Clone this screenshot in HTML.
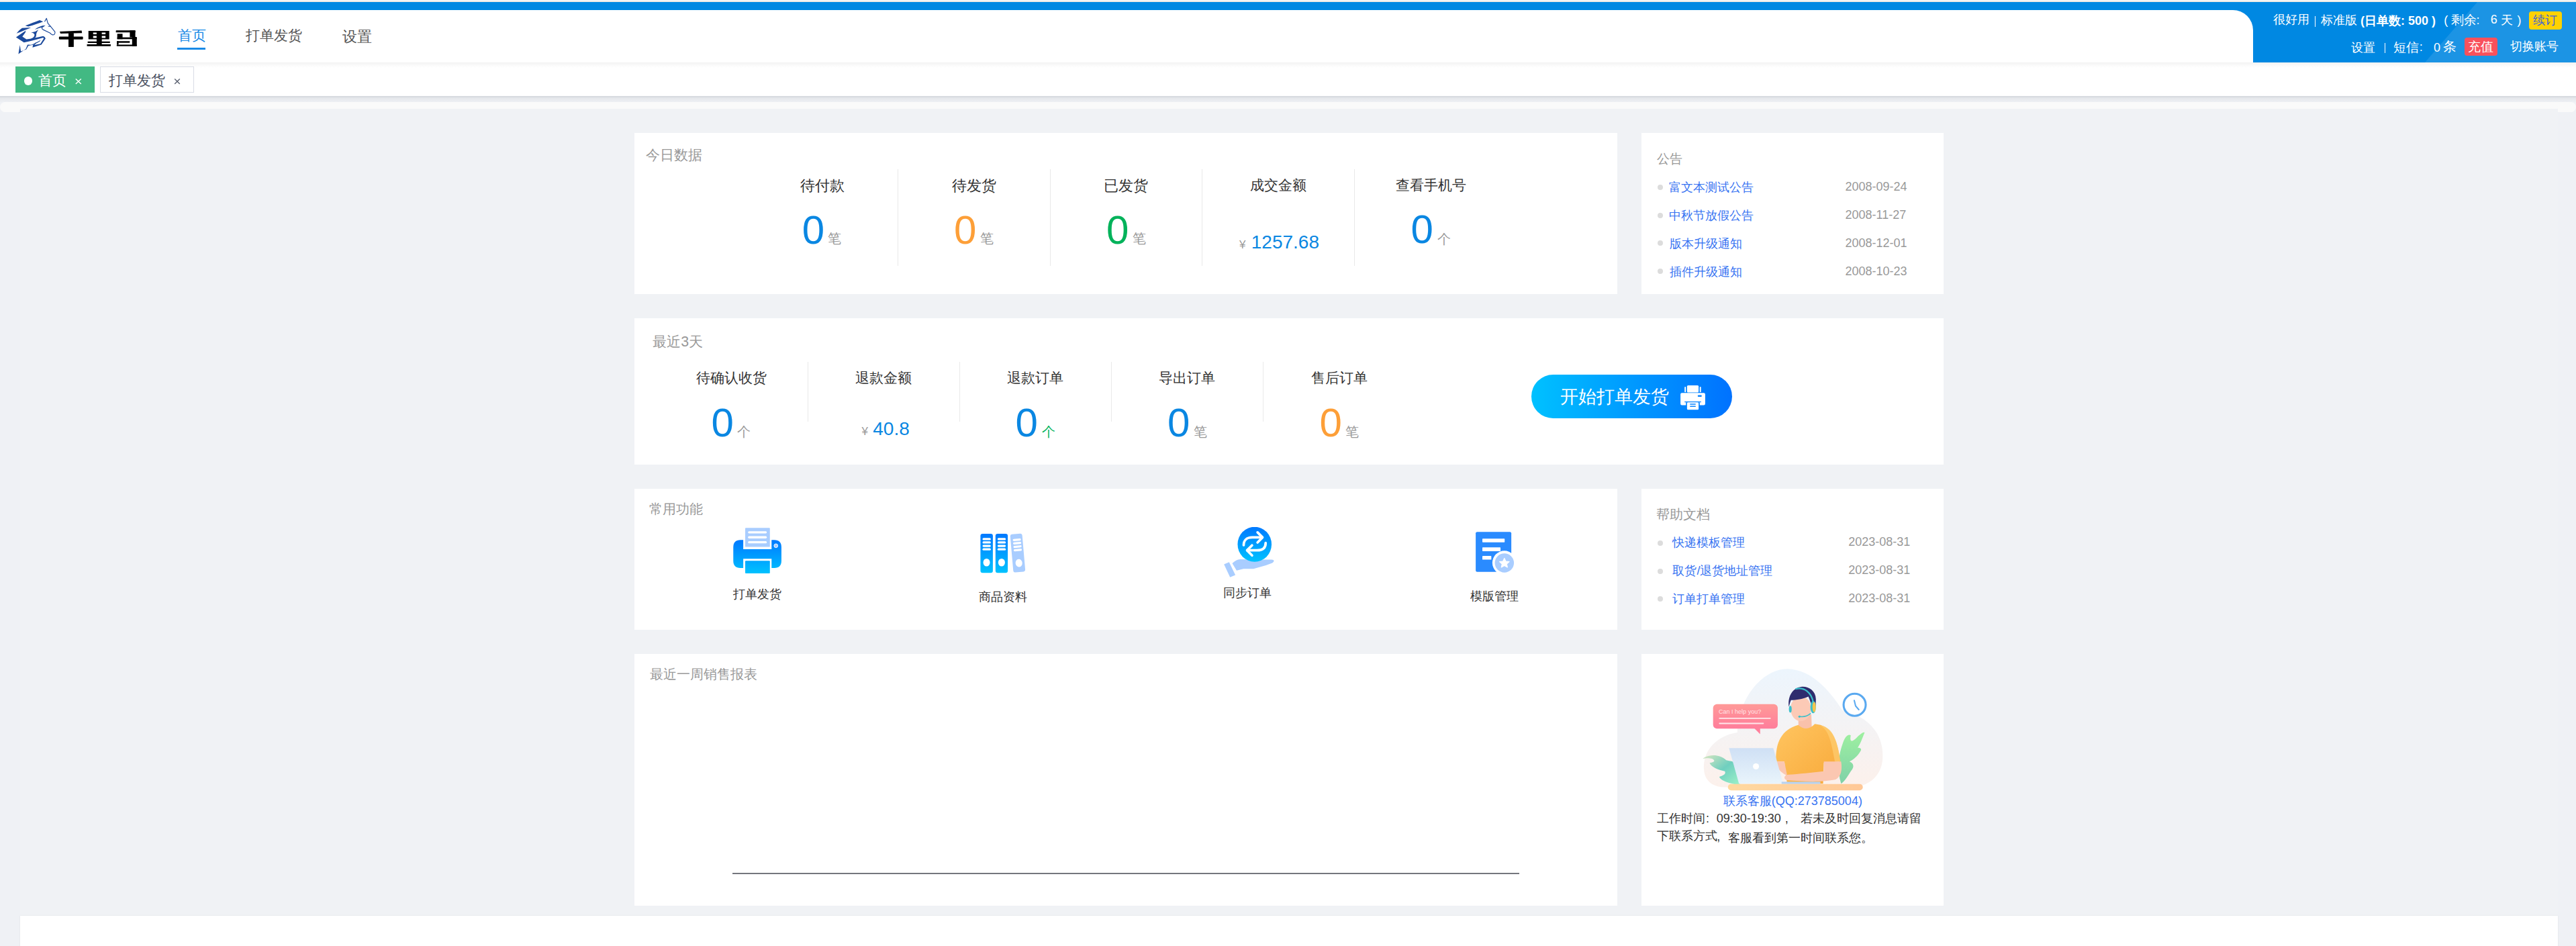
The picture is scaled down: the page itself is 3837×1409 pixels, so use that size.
<!DOCTYPE html>
<html><head><meta charset="utf-8">
<style>
html,body{margin:0;padding:0}
body{width:3837px;height:1409px;position:relative;overflow:hidden;background:#eff1f5;font-family:"Liberation Sans",sans-serif}
.b{position:absolute}
.t{position:absolute;white-space:nowrap;line-height:1;font-family:"Liberation Sans",sans-serif}
.card{position:absolute;background:#fff}
.dv{position:absolute;width:1px;background:#e9e9e9}
.dot{position:absolute;width:8px;height:8px;border-radius:50%;background:#dcdcdc}
svg{position:absolute;overflow:visible}
</style></head><body>
<!-- top browser lines -->
<div class="b" style="left:0;top:0;width:3837px;height:1px;background:#fff"></div>
<div class="b" style="left:0;top:1px;width:3837px;height:1px;background:#e2e2e0"></div>
<div class="b" style="left:0;top:2px;width:3837px;height:1px;background:#faf3ec"></div>
<!-- blue header -->
<div class="b" style="left:0;top:3px;width:3837px;height:90px;background:#0088e2"></div>
<div class="b" style="left:3600px;top:3px;width:237px;height:90px;background:#1c94e4;clip-path:polygon(90px 0,237px 0,237px 90px,12px 90px)"></div>
<div class="b" style="left:0;top:15px;width:3356px;height:78px;background:#fff;border-top-right-radius:30px"></div>
<!-- tab bar -->
<div class="b" style="left:0;top:93px;width:3837px;height:50px;background:#fff"></div>
<div class="b" style="left:0;top:93px;width:3837px;height:8px;background:linear-gradient(#f2f2f2,#fafafa 50%,#fff)"></div>
<div class="b" style="left:0;top:143px;width:3837px;height:9px;background:linear-gradient(#d3d6dc,#e6e8ec 40%,#eef0f4)"></div>
<div class="b" style="left:0;top:152px;width:3837px;height:15px;background:#fafafa;border-radius:8px"></div>
<div class="b" style="left:30px;top:162px;width:3780px;height:1202px;background:#f0f2f5"></div>
<div class="b" style="left:30px;top:1364px;width:3780px;height:60px;background:#fff;box-shadow:0 0 2px rgba(0,0,0,.08)"></div>

<!-- nav underline -->
<div class="b" style="left:264px;top:71px;width:42px;height:3px;background:#1a8ae6"></div>
<!-- tabs -->
<div class="b" style="left:23px;top:99px;width:118px;height:39px;background:#42b983"></div>
<div class="b" style="left:35.8px;top:114.3px;width:12.5px;height:12.5px;border-radius:50%;background:#fff"></div>
<div class="b" style="left:149px;top:99px;width:138px;height:37px;border:1px solid #d8dce5;background:#fff"></div>

<svg style="left:0;top:0" width="300" height="140" viewBox="0 0 300 140"><g stroke-width="1.4" fill="none"><path d="M112.8 117.4 L120.8 125 M120.8 117.4 L112.8 125" stroke="#fff"/><path d="M260.2 117.4 L267.8 125 M267.8 117.4 L260.2 125" stroke="#5a6070"/></g></svg>
<!-- header right badges / separators -->
<div class="b" style="left:3767px;top:17px;width:49px;height:27px;background:#ffd200;border-radius:4px"></div>
<div class="b" style="left:3671px;top:56px;width:49px;height:27px;background:#f9515c;border-radius:4px"></div>
<div class="b" style="left:3447.7px;top:24px;width:1.6px;height:16px;background:#fff"></div>
<div class="b" style="left:3551.7px;top:63.5px;width:1.6px;height:15.5px;background:#fff"></div>

<!-- cards -->
<div class="card" style="left:945px;top:198px;width:1464px;height:240px"></div>
<div class="card" style="left:2445px;top:198px;width:450px;height:240px"></div>
<div class="card" style="left:945px;top:474px;width:1950px;height:218px"></div>
<div class="card" style="left:945px;top:728px;width:1464px;height:210px"></div>
<div class="card" style="left:2445px;top:728px;width:450px;height:210px"></div>
<div class="card" style="left:945px;top:974px;width:1464px;height:375px"></div>
<div class="card" style="left:2445px;top:974px;width:450px;height:375px"></div>

<!-- dividers -->
<div class="dv" style="left:1337px;top:252px;height:144px"></div>
<div class="dv" style="left:1564px;top:252px;height:144px"></div>
<div class="dv" style="left:1790px;top:252px;height:144px"></div>
<div class="dv" style="left:2017px;top:252px;height:144px"></div>
<div class="dv" style="left:1203px;top:539px;height:89px"></div>
<div class="dv" style="left:1429px;top:539px;height:89px"></div>
<div class="dv" style="left:1655px;top:539px;height:89px"></div>
<div class="dv" style="left:1881px;top:539px;height:89px"></div>

<!-- bullets -->
<div class="dot" style="left:2469px;top:274.6px"></div>
<div class="dot" style="left:2469px;top:316.6px"></div>
<div class="dot" style="left:2469px;top:358.4px"></div>
<div class="dot" style="left:2469px;top:400px"></div>
<div class="dot" style="left:2469px;top:804.6px"></div>
<div class="dot" style="left:2469px;top:846.6px"></div>
<div class="dot" style="left:2469px;top:888.3px"></div>

<!-- start button -->
<div class="b" style="left:2281px;top:558px;width:299px;height:65px;border-radius:33px;background:linear-gradient(90deg,#00c1ff,#0072ff)"></div>
<svg style="left:2495px;top:568px" width="55" height="48" viewBox="0 0 1084 946">
 <rect x="352" y="118" width="340" height="207" rx="30" fill="#fff"/>
 <rect x="280" y="160" width="38" height="160" rx="19" fill="#fff"/>
 <rect x="724" y="160" width="38" height="160" rx="19" fill="#fff"/>
 <path d="M200 340 H845 Q885 340 885 380 V660 Q885 700 845 700 H725 V615 H320 V700 H200 Q160 700 160 660 V380 Q160 340 200 340 Z" fill="#fff"/>
 <rect x="280" y="590" width="485" height="25" fill="#0a84ff"/>
 <rect x="665" y="405" width="120" height="50" rx="25" fill="#0a84ff"/>
 <rect x="352" y="615" width="340" height="220" rx="30" fill="#fff"/>
 <rect x="435" y="655" width="175" height="30" rx="15" fill="#0a84ff"/>
 <rect x="435" y="718" width="175" height="30" rx="15" fill="#0a84ff"/>
</svg>

<!-- feature icons -->
<svg style="left:1080px;top:778px" width="100" height="84" viewBox="0 0 1126 946">
 <defs><linearGradient id="gb" gradientUnits="userSpaceOnUse" x1="0" y1="295" x2="0" y2="855"><stop offset="0" stop-color="#0079ff"/><stop offset="1" stop-color="#00c2ff"/></linearGradient></defs>
 <rect x="338" y="92" width="414" height="320" rx="10" fill="#a9cdff"/>
 <rect x="385" y="148" width="315" height="37" rx="18" fill="#fff"/>
 <rect x="385" y="232" width="315" height="37" rx="18" fill="#fff"/>
 <rect x="385" y="315" width="315" height="37" rx="18" fill="#fff"/>
 <path d="M258 295 H305 V450 H780 V295 H825 Q945 295 945 415 V645 Q945 765 825 765 H780 V612 H305 V765 H258 Q138 765 138 645 V415 Q138 295 258 295 Z" fill="url(#gb)"/>
 <circle cx="853" cy="392" r="32" fill="#a9cdff" stroke="#fff" stroke-width="10"/>
 <rect x="338" y="645" width="414" height="210" rx="10" fill="url(#gb)"/>
</svg>
<svg style="left:1450px;top:785px" width="90" height="77" viewBox="0 0 1106 946">
 <defs><linearGradient id="gb2" x1="0" y1="0" x2="0" y2="1"><stop offset="0" stop-color="#0079ff"/><stop offset="1" stop-color="#00c2ff"/></linearGradient></defs>
 <g transform="rotate(-5 810 470)"><rect x="700" y="125" width="220" height="700" rx="35" fill="#a9cdff"/>
 <rect x="740" y="212" width="150" height="40" rx="20" fill="#fff"/><rect x="740" y="275" width="150" height="40" rx="20" fill="#fff"/><rect x="740" y="338" width="150" height="40" rx="20" fill="#fff"/><rect x="740" y="401" width="150" height="40" rx="20" fill="#fff"/>
 <ellipse cx="815" cy="660" rx="62" ry="72" fill="#fff"/></g>
 <rect x="128" y="122" width="227" height="716" rx="40" fill="url(#gb2)"/>
 <rect x="165" y="200" width="153" height="40" rx="20" fill="#fff"/><rect x="165" y="262" width="153" height="40" rx="20" fill="#fff"/><rect x="165" y="325" width="153" height="40" rx="20" fill="#fff"/><rect x="165" y="388" width="153" height="40" rx="20" fill="#fff"/>
 <ellipse cx="240" cy="648" rx="62" ry="72" fill="#fff"/>
 <rect x="403" y="122" width="225" height="716" rx="40" fill="url(#gb2)"/>
 <rect x="440" y="200" width="152" height="40" rx="20" fill="#fff"/><rect x="440" y="262" width="152" height="40" rx="20" fill="#fff"/><rect x="440" y="325" width="152" height="40" rx="20" fill="#fff"/><rect x="440" y="388" width="152" height="40" rx="20" fill="#fff"/>
 <ellipse cx="515" cy="648" rx="62" ry="72" fill="#fff"/>
</svg>
<svg style="left:1815px;top:778px" width="90" height="88" viewBox="0 0 968 946">
 <defs><linearGradient id="gb3" x1="0" y1="0" x2="0" y2="1"><stop offset="0" stop-color="#0079ff"/><stop offset="1" stop-color="#00c2ff"/></linearGradient>
 <clipPath id="cp3"><rect x="0" y="75" width="968" height="900"/></clipPath></defs>
 <path d="M220 655 C260 620 300 592 350 590 L560 598 L850 596 C895 598 900 622 862 650 L760 688 L560 745 L400 745 L290 772 Z" fill="#a9cdff"/>
 <path d="M88 672 L170 638 L270 845 L185 880 Z" fill="#a9cdff"/>
 <ellipse cx="578" cy="352" rx="272" ry="280" fill="url(#gb3)" clip-path="url(#cp3)"/>
 <g fill="none" stroke="#fff" stroke-width="40" stroke-linecap="round" stroke-linejoin="round">
  <path d="M403 365 C403 290 450 240 540 240 L700 240"/><path d="M625 160 L705 240 L625 322"/>
  <path d="M755 330 C755 405 710 448 620 448 L460 448"/><path d="M537 368 L457 448 L537 530"/>
 </g>
</svg>
<svg style="left:2185px;top:782px" width="80" height="80" viewBox="0 0 946 946">
 <rect x="155" y="120" width="627" height="705" rx="25" fill="#2a8bff"/>
 <rect x="272" y="240" width="393" height="65" rx="8" fill="#fff"/>
 <rect x="272" y="393" width="320" height="67" rx="8" fill="#fff"/>
 <rect x="272" y="545" width="158" height="65" rx="8" fill="#fff"/>
 <circle cx="660" cy="665" r="212" fill="#fff"/>
 <circle cx="660" cy="668" r="168" fill="#a9cdff"/>
 <path d="M660 585 L686 640 L746 646 L701 686 L714 745 L660 714 L606 745 L619 686 L574 646 L634 640 Z" fill="#fff" stroke="#fff" stroke-width="14" stroke-linejoin="round"/>
</svg>

<!-- chart axis -->
<div class="b" style="left:1091px;top:1300px;width:1172px;height:2px;background:#74767d"></div>

<svg style="left:2530px;top:990px" width="280" height="195" viewBox="0 0 1358 946">
 <defs>
  <linearGradient id="ibg" x1="0" y1="0" x2="0" y2="1"><stop offset="0" stop-color="#eaf4fd"/><stop offset="1" stop-color="#fcefe9"/></linearGradient>
  <linearGradient id="ibub" x1="0" y1="0" x2="0" y2="1"><stop offset="0" stop-color="#ff9a98"/><stop offset="1" stop-color="#ff7d9b"/></linearGradient>
  <linearGradient id="ishirt" x1="0" y1="0" x2="1" y2="1"><stop offset="0" stop-color="#ffc560"/><stop offset="1" stop-color="#f8a93a"/></linearGradient>
  <linearGradient id="ilap" x1="0" y1="0" x2="0" y2="1"><stop offset="0" stop-color="#cfe0f5"/><stop offset="1" stop-color="#e9f4fb"/></linearGradient>
  <linearGradient id="idesk" x1="0" y1="0" x2="1" y2="0"><stop offset="0" stop-color="#ffd9a0"/><stop offset="1" stop-color="#ffc897"/></linearGradient>
  <linearGradient id="ileafR" x1="0" y1="0" x2="0" y2="1"><stop offset="0" stop-color="#9ef0a0"/><stop offset="1" stop-color="#7fd1a8"/></linearGradient>
  <linearGradient id="ileafL" x1="0" y1="0" x2="1" y2="1"><stop offset="0" stop-color="#d8e6c0"/><stop offset=".5" stop-color="#6fcfbf"/><stop offset="1" stop-color="#9ef2c8"/></linearGradient>
 </defs>
 <path d="M40 770 C20 620 140 510 280 490 C290 230 470 30 640 30 C800 32 930 160 1040 330 C1250 380 1340 520 1330 680 C1320 820 1210 885 1100 885 L190 885 C100 885 50 840 40 770 Z" fill="url(#ibg)" opacity=".9"/>
 <!-- right plant -->
 <path d="M1030 860 C1000 760 1010 650 1045 560 C1060 520 1080 500 1100 510 C1090 560 1110 560 1140 530 C1170 500 1190 485 1200 490 C1180 540 1170 570 1150 600 C1175 600 1185 610 1160 640 C1140 670 1110 690 1090 700 C1120 710 1130 740 1100 770 C1080 800 1060 840 1030 860 Z" fill="url(#ileafR)"/>
 <!-- left plant -->
 <path d="M300 870 C230 860 160 840 150 810 C180 800 200 790 190 770 C140 760 90 740 80 710 C120 705 120 690 100 680 C60 670 35 680 30 680 C60 650 150 640 200 690 C230 700 250 690 260 720 C280 780 300 830 300 870 Z" fill="url(#ileafL)"/>
 <!-- speech bubble -->
 <rect x="105" y="285" width="467" height="177" rx="28" fill="url(#ibub)"/>
 <path d="M398 455 L445 502 L445 455 Z" fill="#ff7f9b"/>
 <text x="145" y="352" font-family="Liberation Sans" font-size="44" fill="#fff" opacity=".75">Can I help you?</text>
 <rect x="147" y="383" width="375" height="9" rx="4" fill="#fff" opacity=".8"/>
 <rect x="147" y="420" width="325" height="9" rx="4" fill="#fff" opacity=".8"/>
 <!-- clock -->
 <circle cx="1128" cy="290" r="80" fill="#fff" stroke="#5aa9f0" stroke-width="15"/>
 <path d="M1125 258 L1135 298 L1158 325" fill="none" stroke="#5aa9f0" stroke-width="10" stroke-linecap="round"/>
 <!-- neck -->
 <path d="M720 360 L815 360 L818 450 C790 480 740 480 722 450 Z" fill="#f9c1ab"/>
 <!-- shirt -->
 <path d="M560 700 C555 560 600 470 720 435 C760 470 800 470 840 428 C960 440 1000 520 1025 700 L905 710 L900 860 L640 860 L620 700 Z" fill="url(#ishirt)"/>
 <path d="M880 440 C940 470 960 560 985 700 L1025 700 C1000 520 960 450 880 440 Z" fill="#ffd27a" opacity=".6"/>
 <!-- arms -->
 <path d="M905 700 L1030 700 C1040 760 1030 810 990 830 C900 850 760 845 640 835 C615 830 610 800 650 795 C720 790 820 780 905 770 Z" fill="#fbc7b1"/>
 <path d="M560 700 L620 700 L640 800 C610 790 575 760 565 730 Z" fill="#fbc7b1"/>
 <!-- head -->
 <ellipse cx="739" cy="318" rx="74" ry="90" fill="#fccab6"/>
 <path d="M653 305 C642 230 680 168 741 160 C792 154 846 185 848 250 L846 300 L816 292 C806 262 800 242 793 230 C760 246 702 256 668 256 C661 272 657 288 653 305 Z" fill="#2f2c6e"/>
 <path d="M700 176 C762 158 818 200 830 278" fill="none" stroke="#3bbfca" stroke-width="11"/>
 <ellipse cx="663" cy="322" rx="10" ry="25" fill="#3bbfca"/>
 <ellipse cx="828" cy="306" rx="20" ry="45" fill="#3bbfca"/>
 <ellipse cx="835" cy="306" rx="12" ry="37" fill="#f6c54b"/>
 <path d="M811 351 C790 370 760 378 733 375" fill="none" stroke="#3bbfca" stroke-width="7"/>
 <circle cx="729" cy="375" r="8" fill="#3bbfca"/>
 <!-- laptop -->
 <path d="M220 603 L540 603 L612 860 L292 860 Z" fill="url(#ilap)"/>
 <circle cx="415" cy="735" r="22" fill="#fff"/>
 <rect x="600" y="846" width="280" height="16" fill="#b7d2f1"/>
 <!-- desk -->
 <rect x="212" y="862" width="975" height="46" rx="23" fill="url(#idesk)"/>
</svg>

<svg style="left:20px;top:22px" width="190" height="64" viewBox="0 0 2576 868">
 <g fill="#1c4a9c">
  <path d="M238 222 C330 190 440 140 530 110 L600 138 C520 165 420 205 300 236 Z"/>
  <path d="M62 378 C100 330 140 290 175 268 L355 256 C280 290 180 330 62 378 Z"/>
  <path d="M430 300 C490 250 560 218 645 214 L600 250 C550 255 490 275 430 300 Z"/>
  <path d="M250 320 L52 455 L212 558 C340 540 470 500 605 462 L632 475 L640 458 L600 432 C480 455 360 490 262 495 L180 440 L240 360 Z"/>
  <path d="M355 355 C420 352 470 330 505 298 C475 345 455 385 460 420 C455 465 410 492 330 497 C395 470 430 440 425 400 C420 378 395 362 355 355 Z"/>
  <path d="M130 612 L100 792 L250 688 L285 605 L358 608 C430 578 500 545 550 508 L530 540 C470 575 420 600 380 612 L300 628 L260 700 L150 740 Z"/>
  <path d="M385 662 L565 602 L650 478 L620 440 L580 450 L615 475 L545 585 L425 612 L455 575 L535 530 L440 565 L395 610 Z"/>
 </g>
 <path d="M630 140 L668 72 L695 170 L745 230 L838 345 C850 385 820 410 788 405 C765 400 750 385 735 365 L598 300 C570 283 568 262 588 245" fill="none" stroke="#1c4a9c" stroke-width="16" stroke-linejoin="round"/>
 <path d="M700 232 L745 238" stroke="#1c4a9c" stroke-width="14"/>
 <g fill="#000">
  <path d="M935 340 L1378 320 L1385 368 L950 380 Z"/>
  <rect x="920" y="440" width="485" height="60" rx="14"/>
  <rect x="1112" y="368" width="106" height="282"/>
  <path fill-rule="evenodd" d="M1515 325 H1935 V495 H1785 V540 H1950 V570 H1785 V598 H1965 V635 H1485 V598 H1680 V570 H1500 V540 H1680 V495 H1515 Z M1610 358 H1680 V395 H1610 Z M1785 358 H1860 V395 H1785 Z M1610 428 H1680 V468 H1610 Z M1785 428 H1860 V468 H1785 Z"/>
  <rect x="2070" y="317" width="392" height="40" rx="8"/>
  <rect x="2351" y="317" width="111" height="137"/>
  <rect x="2097" y="384" width="107" height="108"/>
  <rect x="2097" y="456" width="395" height="36"/>
  <rect x="2397" y="449" width="95" height="185" rx="6"/>
  <rect x="2102" y="531" width="249" height="34" rx="6"/>
  <rect x="2088" y="531" width="36" height="74"/>
  <rect x="2085" y="605" width="407" height="29" rx="6"/>
 </g>
</svg>

<div class="t" style="left:264.9px;top:42.6px;font-size:20.93px;color:#1a8ae6;font-weight:400">首页</div>
<div class="t" style="left:366.0px;top:43.0px;font-size:20.85px;color:#555;font-weight:400">打单发货</div>
<div class="t" style="left:510.1px;top:43.8px;font-size:21.59px;color:#555;font-weight:400">设置</div>
<div class="t" style="left:56.8px;top:110.0px;font-size:21.49px;color:#fff;font-weight:400">首页</div>
<div class="t" style="left:161.8px;top:109.0px;font-size:20.98px;color:#495060;font-weight:400">打单发货</div>
<div class="t" style="left:3386.0px;top:20.0px;font-size:18.4px;color:#fff;font-weight:400">很好用</div>
<div class="t" style="left:3456.7px;top:21.0px;font-size:18.24px;color:#fff;font-weight:400">标准版</div>
<div class="t" style="left:3516.0px;top:21.6px;font-size:18px;color:#fff;font-weight:700">(日单数: 500 )</div>
<div class="t" style="left:3640.3px;top:20.5px;font-size:18px;color:#fff;font-weight:400">(</div>
<div class="t" style="left:3650.7px;top:21.0px;font-size:18.7px;color:#fff;font-weight:400">剩余</div>
<div class="t" style="left:3688.6px;top:20.6px;font-size:18px;color:#fff;font-weight:400">:</div>
<div class="t" style="left:3709.7px;top:19.8px;font-size:18px;color:#fff;font-weight:400">6</div>
<div class="t" style="left:3724.9px;top:20.8px;font-size:18px;color:#fff;font-weight:400">天</div>
<div class="t" style="left:3749.6px;top:20.5px;font-size:18px;color:#fff;font-weight:400">)</div>
<div class="t" style="left:3773.2px;top:21.0px;font-size:18.42px;color:#3f63d6;font-weight:400">续订</div>
<div class="t" style="left:3502.4px;top:61.6px;font-size:18.21px;color:#fff;font-weight:400">设置</div>
<div class="t" style="left:3565.1px;top:61.6px;font-size:18.6px;color:#fff;font-weight:400">短信</div>
<div class="t" style="left:3603.8px;top:61.0px;font-size:18px;color:#fff;font-weight:400">:</div>
<div class="t" style="left:3624.9px;top:61.5px;font-size:18px;color:#fff;font-weight:400">0</div>
<div class="t" style="left:3639.4px;top:58.7px;font-size:20.0px;color:#fff;font-weight:400">条</div>
<div class="t" style="left:3675.9px;top:61.3px;font-size:18.7px;color:#fff;font-weight:400">充值</div>
<div class="t" style="left:3739.0px;top:60.3px;font-size:18.0px;color:#fff;font-weight:400">切换账号</div>
<div class="t" style="left:962.0px;top:221.4px;font-size:21.32px;color:#999;font-weight:400">今日数据</div>
<div class="t" style="left:2468.0px;top:226.8px;font-size:19.49px;color:#999;font-weight:400">公告</div>
<div class="t" style="left:972.3px;top:499.0px;font-size:21.35px;color:#999;font-weight:400">最近3天</div>
<div class="t" style="left:967.4px;top:749.0px;font-size:19.52px;color:#999;font-weight:400">常用功能</div>
<div class="t" style="left:2466.6px;top:755.5px;font-size:20.23px;color:#999;font-weight:400">帮助文档</div>
<div class="t" style="left:967.8px;top:994.8px;font-size:19.67px;color:#999;font-weight:400">最近一周销售报表</div>
<div class="t" style="left:1191.5px;top:265.8px;font-size:21.69px;color:#333;font-weight:400">待付款</div>
<div class="t" style="left:1418.0px;top:265.8px;font-size:21.55px;color:#333;font-weight:400">待发货</div>
<div class="t" style="left:1643.6px;top:265.8px;font-size:22.15px;color:#333;font-weight:400">已发货</div>
<div class="t" style="left:1862.0px;top:265.8px;font-size:21.32px;color:#333;font-weight:400">成交金额</div>
<div class="t" style="left:2078.5px;top:265.8px;font-size:21.26px;color:#333;font-weight:400">查看手机号</div>
<div class="t" style="left:1194.7px;top:312.6px;font-size:60px;color:#0a87e2;font-weight:400">0</div>
<div class="t" style="left:1233.0px;top:344.7px;font-size:20px;color:#999;font-weight:400">笔</div>
<div class="t" style="left:1421.0px;top:312.6px;font-size:60px;color:#fd9f38;font-weight:400">0</div>
<div class="t" style="left:1460.0px;top:344.7px;font-size:20px;color:#999;font-weight:400">笔</div>
<div class="t" style="left:1648.0px;top:312.6px;font-size:60px;color:#00b25a;font-weight:400">0</div>
<div class="t" style="left:1687.0px;top:344.7px;font-size:20px;color:#999;font-weight:400">笔</div>
<div class="t" style="left:1846.0px;top:356.0px;font-size:17px;color:#999;font-weight:400">¥</div>
<div class="t" style="left:1863.8px;top:346.5px;font-size:28px;color:#0a87e2;font-weight:400">1257.68</div>
<div class="t" style="left:2101.5px;top:311.5px;font-size:60px;color:#0a87e2;font-weight:400">0</div>
<div class="t" style="left:2140.7px;top:345.6px;font-size:20px;color:#999;font-weight:400">个</div>
<div class="t" style="left:2485.6px;top:269.7px;font-size:18px;color:#3874f2;font-weight:400">富文本测试公告</div>
<div class="t" style="left:2748.5px;top:268.9px;font-size:18px;color:#999;font-weight:400">2008-09-24</div>
<div class="t" style="left:2485.6px;top:311.7px;font-size:18px;color:#3874f2;font-weight:400">中秋节放假公告</div>
<div class="t" style="left:2748.5px;top:310.9px;font-size:18px;color:#999;font-weight:400">2008-11-27</div>
<div class="t" style="left:2486.6px;top:353.7px;font-size:18px;color:#3874f2;font-weight:400">版本升级通知</div>
<div class="t" style="left:2748.5px;top:352.9px;font-size:18px;color:#999;font-weight:400">2008-12-01</div>
<div class="t" style="left:2486.6px;top:395.7px;font-size:18px;color:#3874f2;font-weight:400">插件升级通知</div>
<div class="t" style="left:2748.5px;top:394.9px;font-size:18px;color:#999;font-weight:400">2008-10-23</div>
<div class="t" style="left:1036.5px;top:552.5px;font-size:20.85px;color:#333;font-weight:400">待确认收货</div>
<div class="t" style="left:1274.0px;top:552.5px;font-size:21.27px;color:#333;font-weight:400">退款金额</div>
<div class="t" style="left:1500.0px;top:552.5px;font-size:21.25px;color:#333;font-weight:400">退款订单</div>
<div class="t" style="left:1726.0px;top:551.5px;font-size:21.17px;color:#333;font-weight:400">导出订单</div>
<div class="t" style="left:1952.5px;top:551.5px;font-size:21.14px;color:#333;font-weight:400">售后订单</div>
<div class="t" style="left:1059.4px;top:600.0px;font-size:60px;color:#0a87e2;font-weight:400">0</div>
<div class="t" style="left:1098.0px;top:633.0px;font-size:20px;color:#999;font-weight:400">个</div>
<div class="t" style="left:1283.4px;top:633.7px;font-size:17px;color:#999;font-weight:400">¥</div>
<div class="t" style="left:1300.3px;top:625.0px;font-size:28px;color:#0a87e2;font-weight:400">40.8</div>
<div class="t" style="left:1512.5px;top:600.0px;font-size:60px;color:#0a87e2;font-weight:400">0</div>
<div class="t" style="left:1551.9px;top:633.0px;font-size:20px;color:#00b25a;font-weight:400">个</div>
<div class="t" style="left:1739.0px;top:600.0px;font-size:60px;color:#0a87e2;font-weight:400">0</div>
<div class="t" style="left:1777.9px;top:633.0px;font-size:20px;color:#999;font-weight:400">笔</div>
<div class="t" style="left:1965.4px;top:600.0px;font-size:60px;color:#fd9f38;font-weight:400">0</div>
<div class="t" style="left:2004.4px;top:633.0px;font-size:20px;color:#999;font-weight:400">笔</div>
<div class="t" style="left:2324.4px;top:576.8px;font-size:27.32px;color:#fff;font-weight:400">开始打单发货</div>
<div class="t" style="left:1091.8px;top:875.9px;font-size:18.12px;color:#333;font-weight:400">打单发货</div>
<div class="t" style="left:1458.0px;top:879.8px;font-size:18.23px;color:#333;font-weight:400">商品资料</div>
<div class="t" style="left:1822.3px;top:873.7px;font-size:18.48px;color:#333;font-weight:400">同步订单</div>
<div class="t" style="left:2189.9px;top:879.0px;font-size:18.08px;color:#333;font-weight:400">模版管理</div>
<div class="t" style="left:2491.4px;top:799.3px;font-size:18px;color:#3874f2;font-weight:400">快递模板管理</div>
<div class="t" style="left:2753.3px;top:798.4px;font-size:18px;color:#999;font-weight:400">2023-08-31</div>
<div class="t" style="left:2491.4px;top:841.3px;font-size:18px;color:#3874f2;font-weight:400">取货/退货地址管理</div>
<div class="t" style="left:2753.3px;top:840.4px;font-size:18px;color:#999;font-weight:400">2023-08-31</div>
<div class="t" style="left:2491.4px;top:883.3px;font-size:18px;color:#3874f2;font-weight:400">订单打单管理</div>
<div class="t" style="left:2753.3px;top:882.4px;font-size:18px;color:#999;font-weight:400">2023-08-31</div>
<div class="t" style="left:2566.8px;top:1184.0px;font-size:18px;color:#3874f2;font-weight:400">联系客服(QQ:273785004)</div>
<div class="t" style="left:2467.8px;top:1210.0px;font-size:18.27px;color:#333;font-weight:400">工作时间</div>
<div class="t" style="left:2541.0px;top:1210.2px;font-size:18px;color:#333;font-weight:400">:</div>
<div class="t" style="left:2556.8px;top:1210.0px;font-size:18px;color:#333;font-weight:400">09:30-19:30</div>
<div class="t" style="left:2658.8px;top:1209.9px;font-size:18px;color:#333;font-weight:400">,</div>
<div class="t" style="left:2681.7px;top:1210.0px;font-size:18.13px;color:#333;font-weight:400">若未及时回复消息请留</div>
<div class="t" style="left:2467.8px;top:1236.1px;font-size:18.06px;color:#333;font-weight:400">下联系方式</div>
<div class="t" style="left:2557.3px;top:1236.5px;font-size:18px;color:#333;font-weight:400">,</div>
<div class="t" style="left:2574.3px;top:1238.6px;font-size:18.17px;color:#333;font-weight:400">客服看到第一时间联系您。</div>
</body></html>
